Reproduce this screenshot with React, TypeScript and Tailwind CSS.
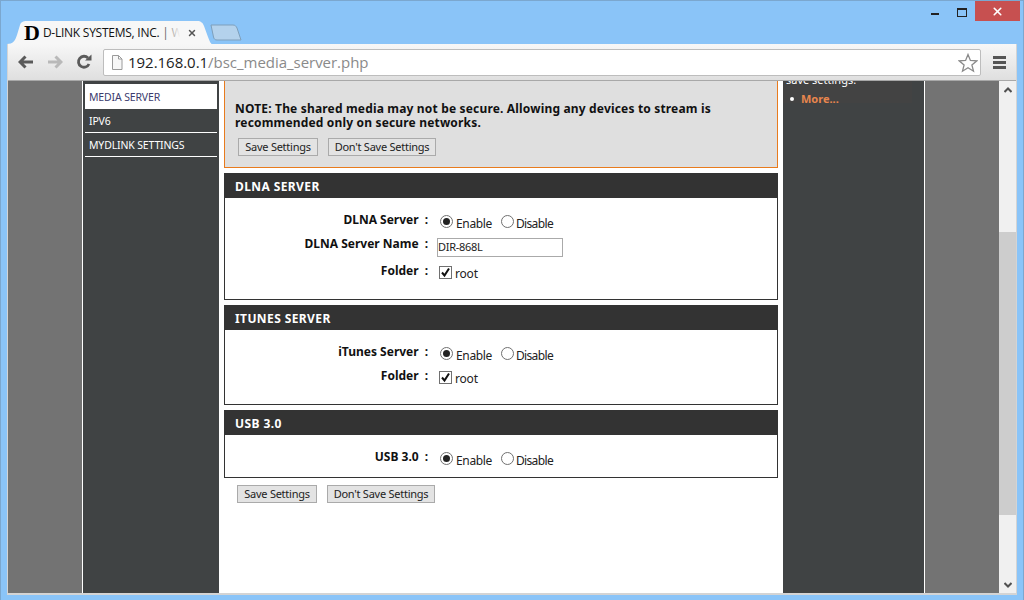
import { X } from "lucide-react";

const bodyFont = "font-['Noto_Sans',sans-serif]";

function Radio({ checked }: { checked?: boolean }) {
  return (
    <span className="flex h-[13px] w-[13px] items-center justify-center rounded-full border border-[#707070] bg-white">
      {checked && <span className="h-[7px] w-[7px] rounded-full bg-[#222]" />}
    </span>
  );
}

function EnableDisable() {
  return (
    <div className="mt-[2px] flex items-center pl-[12px] text-[12px] text-[#222]">
      <Radio checked />
      <span className="mt-[5px] ml-[3px] tracking-[-0.35px]">Enable</span>
      <span className="ml-[9px]">
        <Radio />
      </span>
      <span className="mt-[5px] ml-[2px] tracking-[-0.65px]">Disable</span>
    </div>
  );
}

function RootCheck() {
  return (
    <div className="flex items-center pl-[11px] text-[12px] text-[#222]">
      <span className="mt-[2px] flex h-[13px] w-[13px] items-center justify-center border border-[#707070] bg-white">
        <svg width="11" height="11" viewBox="0 0 11 11">
          <path d="M2 5.5 L4.5 8.5 L9 1.5" fill="none" stroke="#111" strokeWidth="2" />
        </svg>
      </span>
      <span className="mt-[6px] ml-[3px] tracking-[-0.2px]">root</span>
    </div>
  );
}

function Row({ label, className, children }: { label: string; className?: string; children: React.ReactNode }) {
  return (
    <div className={`flex items-center ${className ?? ""}`}>
      <div className="w-[203px] text-right text-[12px] font-bold whitespace-nowrap text-[#111]">
        {label}
        <span className="ml-[6px]">:</span>
      </div>
      {children}
    </div>
  );
}

function Section({ title, bodyHeight, children }: { title: string; bodyHeight: string; children: React.ReactNode }) {
  return (
    <section className="border border-[#333] bg-white">
      <h2 className="flex h-[24px] items-center bg-[#333] pt-[2px] pl-[10px] text-[12px] font-bold tracking-[0.4px] text-white">
        {title}
      </h2>
      <div className={`${bodyHeight} pt-[12px]`}>{children}</div>
    </section>
  );
}

function Btn({ label, width }: { label: string; width: string }) {
  return (
    <span className={`flex h-[18px] ${width} items-center justify-center border border-[#aaa] bg-[#e3e3e3] text-[11px] tracking-[-0.25px] text-[#222]`}>
      {label}
    </span>
  );
}

export default function App() {
  return (
    <div className={`flex h-[600px] w-[1024px] flex-col overflow-hidden border-t border-r border-l border-[#7ba7cf] bg-[#8ac4f8] ${bodyFont}`}>
      {/* title bar */}
      <div className="flex h-[20px] shrink-0 justify-end pr-[3px]">
        <div className="mt-[12px] mr-[18px] h-[2px] w-[8px] bg-[#222]" />
        <div className="mt-[7px] mr-[8px] h-[9px] w-[10px] border border-t-2 border-[#222]" />
        <div className="flex h-[20px] w-[45px] items-center justify-center bg-[#c75050]">
          <X size={13} color="#fff" strokeWidth={3} />
        </div>
      </div>

      {/* tab strip */}
      <div className="flex h-[23px] shrink-0 items-end pl-[6px]">
        <div className="relative flex h-[23px] w-[205px] items-center">
          <svg className="absolute inset-0" width="205" height="23" viewBox="0 0 205 23">
            <path d="M0 23 C6 23 8 20 10 14 L13 4 C14 1 16 0 20 0 L190 0 C194 0 196 2 197 5 L201 16 C203 21 204 23 205 23 Z" fill="#f7f7f7" />
          </svg>
          <span className="relative ml-[17px] font-['Liberation_Serif',serif] text-[22px] leading-none font-bold text-black">D</span>
          <span className="relative ml-[3px] w-[137px] overflow-hidden font-['Open_Sans',sans-serif] text-[12px] tracking-[-0.25px] whitespace-nowrap text-[#111]">
            D-LINK SYSTEMS, INC. | W
            <span className="absolute inset-y-0 right-0 w-[22px] bg-gradient-to-r from-transparent to-[#f7f7f7]" />
          </span>
          <X className="relative ml-[7px]" size={10} color="#555" strokeWidth={3.5} />
        </div>
        <svg className="mb-[3px] -ml-[2px]" width="32" height="17" viewBox="0 0 32 17">
          <path d="M1 1 L23 1 C25 1 26 2 27 4 L31 16 L7 16 C5 16 4 15 3.5 13 Z" fill="#b4d2ec" stroke="#7e9fbb" />
        </svg>
      </div>

      {/* chrome window */}
      <div className="mx-[6px] flex min-h-0 flex-1 flex-col border-x border-[#d4d4d4]">
        <div className="flex h-[37px] shrink-0 items-center border-b border-[#a8a8a8] bg-gradient-to-b from-[#f7f7f7] to-[#dfdfdf]">
          <svg className="ml-[10px]" width="16" height="14" viewBox="0 0 16 14">
            <path d="M7.5 1.5 L2 7 L7.5 12.5 M2 7 L15 7" fill="none" stroke="#5a5a5a" strokeWidth="3" />
          </svg>
          <svg className="ml-[13px]" width="16" height="14" viewBox="0 0 16 14">
            <path d="M8.5 1.5 L14 7 L8.5 12.5 M14 7 L1 7" fill="none" stroke="#b9b9b9" strokeWidth="3" />
          </svg>
          <svg className="ml-[13px]" width="16" height="16" viewBox="0 0 16 16">
            <path d="M13 10 A5.5 5.5 0 1 1 12 4" fill="none" stroke="#5a5a5a" strokeWidth="2.8" />
            <path d="M9 6.5 L15.5 6.5 L15.5 0.5 Z" fill="#5a5a5a" />
          </svg>
          <div className="mt-[1px] ml-[11px] flex h-[27px] w-[878px] items-center rounded-[2px] border border-[#bdbdbd] bg-white">
            <svg className="ml-[7px]" width="12" height="15" viewBox="0 0 12 15">
              <path d="M1.5 0.5 H7.5 L11 4 V14.5 H1.5 Z M7.5 0.5 V4 H11" fill="#f7f7f7" stroke="#9a9a9a" />
            </svg>
            <span className="ml-[5px] font-['Open_Sans',sans-serif] text-[15px] tracking-[-0.03px] text-[#222]">
              192.168.0.1<span className="text-[#8a8a8a]">/bsc_media_server.php</span>
            </span>
            <svg className="mr-[2px] ml-auto" width="20" height="20" viewBox="0 0 20 20">
              <path d="M10 1.5 L12.4 7.4 L18.8 7.8 L13.9 11.9 L15.5 18.2 L10 14.8 L4.5 18.2 L6.1 11.9 L1.2 7.8 L7.6 7.4 Z" fill="#fff" stroke="#8a8a8a" strokeWidth="1.3" />
            </svg>
          </div>
          <div className="ml-[12px] flex w-[13px] flex-col gap-[2px]">
            <span className="h-[3px] bg-[#555]" />
            <span className="h-[3px] bg-[#555]" />
            <span className="h-[3px] bg-[#555]" />
          </div>
        </div>

        {/* page */}
        <div className="flex min-h-0 flex-1 bg-white">
          <div className="w-[75px] shrink-0 border-r border-white bg-[#737373]" />
          <div className="w-[136px] shrink-0 bg-[#404344] px-[2px] pt-[3px] text-[10.5px] tracking-[-0.15px]">
            <div className="flex h-[25px] items-center bg-white pt-[2px] pl-[4px] text-[#3c3c6e]">MEDIA SERVER</div>
            <div className="flex h-[24px] items-center border-b border-white pt-[2px] pl-[4px] text-white">IPV6</div>
            <div className="flex h-[24px] items-center border-b border-white pt-[2px] pl-[4px] text-white">MYDLINK SETTINGS</div>
          </div>

          <main className="flex w-[564px] shrink-0 flex-col gap-[5px] overflow-hidden bg-white px-[5px]">
            <div className="h-[87px] shrink-0 border-r border-b border-l border-[#e87b1e] bg-[#dfdfdf] pt-[21px] pl-[10px]">
              <p className="text-[12px] leading-[14px] font-bold tracking-[0.17px] text-[#111]">
                NOTE: The shared media may not be secure. Allowing any devices to stream is
                <br />
                recommended only on secure networks.
              </p>
              <div className="mt-[8px] flex gap-[10px] pl-[3px]">
                <Btn label="Save Settings" width="w-[80px]" />
                <Btn label="Don't Save Settings" width="w-[108px]" />
              </div>
            </div>

            <Section title="DLNA SERVER" bodyHeight="h-[101px]">
              <Row label="DLNA Server" className="h-[20px]">
                <EnableDisable />
              </Row>
              <Row label="DLNA Server Name" className="mt-[4px] h-[20px]">
                <div className="mt-[6px] ml-[9px] flex h-[19px] w-[126px] items-center border border-[#aaa] text-[11px] tracking-[-0.3px] text-[#222]">
                  DIR-868L
                </div>
              </Row>
              <Row label="Folder" className="mt-[7px] h-[20px]">
                <RootCheck />
              </Row>
            </Section>

            <Section title="ITUNES SERVER" bodyHeight="h-[74px]">
              <Row label="iTunes Server" className="h-[20px]">
                <EnableDisable />
              </Row>
              <Row label="Folder" className="mt-[4px] h-[20px]">
                <RootCheck />
              </Row>
            </Section>

            <Section title="USB 3.0" bodyHeight="h-[42px]">
              <Row label="USB 3.0" className="h-[20px]">
                <EnableDisable />
              </Row>
            </Section>

            <div className="mt-[2px] flex gap-[10px] pl-[13px]">
              <Btn label="Save Settings" width="w-[80px]" />
              <Btn label="Don't Save Settings" width="w-[108px]" />
            </div>
          </main>

          <aside className="w-[141px] shrink-0 overflow-hidden bg-[#404344]">
            <div className="h-[29px] w-[129px] bg-[#434343] pl-[3px]">
              <p className="-mt-[7px] text-[11px] leading-[12px] text-white">save settings.</p>
              <div className="mt-[5px] flex items-center pl-[4px]">
                <span className="h-[4px] w-[4px] rounded-full bg-white" />
                <span className="ml-[7px] text-[11px] font-bold text-[#e8864e]">More...</span>
              </div>
            </div>
          </aside>

          <div className="w-[75px] shrink-0 border-l border-white bg-[#737373]" />

          <div className="flex w-[17px] shrink-0 flex-col items-center bg-[#f0f0f0]">
            <div className="flex h-[17px] items-center justify-center">
              <svg width="8" height="6" viewBox="0 0 8 6">
                <path d="M0.5 5 L4 1.5 L7.5 5" fill="none" stroke="#505050" strokeWidth="2" />
              </svg>
            </div>
            <div className="mt-[134px] h-[283px] w-full bg-[#cdcdcd]" />
            <div className="mt-auto flex h-[17px] items-center justify-center">
              <svg width="8" height="6" viewBox="0 0 8 6">
                <path d="M0.5 1 L4 4.5 L7.5 1" fill="none" stroke="#505050" strokeWidth="2" />
              </svg>
            </div>
          </div>
        </div>
        <div className="h-[2px] shrink-0 bg-[#d4d4d4]" />
      </div>
      <div className="h-[5px] shrink-0" />
    </div>
  );
}
